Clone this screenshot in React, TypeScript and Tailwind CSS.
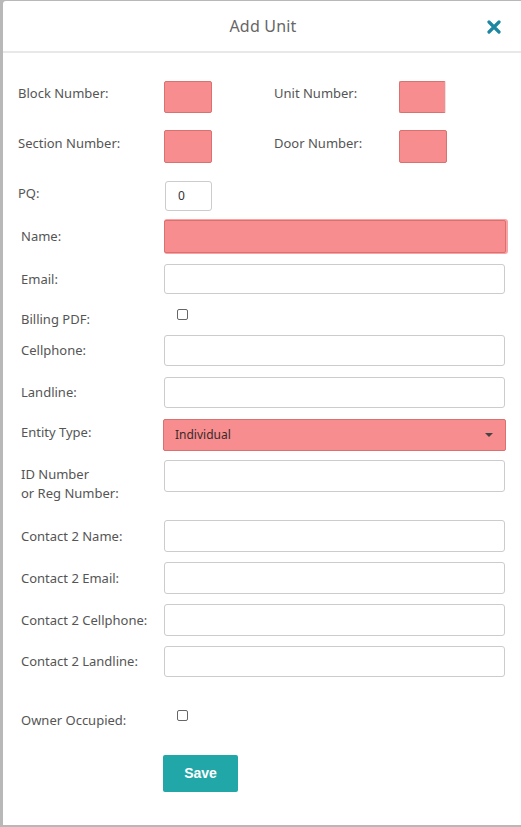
import React from 'react';

const font = { fontFamily: '"Noto Sans", "Liberation Sans", Arial, sans-serif' };

function Label({ children, className = '' }: { children: React.ReactNode; className?: string }) {
  return <div className={`text-[13px] text-[#555] leading-[19px] ${className}`}>{children}</div>;
}

function TextBox({ className = '' }: { className?: string }) {
  return <div className={`w-[341px] border border-[#ccc] rounded-[3px] bg-white ${className}`} />;
}

function Check() {
  return <span className="block w-[11px] h-[11px] border border-[#666] rounded-[2px] bg-white" />;
}

export default function App() {
  return (
    <div className="w-[521px] h-[827px] bg-[#b8b8b8] pl-[3px] pb-[2px] pt-px" style={font}>
      <div className="h-full bg-white rounded-tl-[3px] flex flex-col">
        {/* header */}
        <div className="h-[52px] flex items-center justify-center relative border-b-2 border-[#e8e8e8]">
          <span className="text-[16px] text-[#666] tracking-[0.2px] ml-[2px]">Add Unit</span>
          <svg className="absolute right-[20px] top-[19px]" width="14" height="14" viewBox="0 0 14 14">
            <path d="M2 2 L12 12 M12 2 L2 12" stroke="#1d86a1" strokeWidth="3.2" strokeLinecap="round" />
          </svg>
        </div>

        {/* form */}
        <div className="flex flex-col">
          {/* block / unit */}
          <div className="flex items-start mt-[28px] h-[32px]">
            <Label className="w-[161px] pl-[15px] pt-[3px]">Block Number:</Label>
            <div className="w-[48px] h-[32px] bg-[#f78d8f] border border-[#d8716f] rounded-[2px]" />
            <Label className="w-[125px] pl-[62px] box-content pt-[3px]">Unit Number:</Label>
            <div className="w-[47px] h-[32px] bg-[#f78d8f] border border-[#d8716f] border-r-[#e3e3e3] rounded-[2px]" />
          </div>

          {/* section / door */}
          <div className="flex items-start mt-[17px] h-[33px]">
            <Label className="w-[161px] pl-[15px] pt-[4px]">Section Number:</Label>
            <div className="w-[48px] h-[33px] bg-[#f78d8f] border border-[#d8716f] rounded-[2px]" />
            <Label className="w-[125px] pl-[62px] box-content pt-[4px]">Door Number:</Label>
            <div className="w-[48px] h-[33px] bg-[#f78d8f] border border-[#d8716f] rounded-[2px]" />
          </div>

          {/* PQ */}
          <div className="flex items-start mt-[18px] h-[30px]">
            <Label className="w-[162px] pl-[15px] pt-[3px]">PQ:</Label>
            <div className="w-[47px] h-[30px] border border-[#ccc] rounded-[3px] flex items-center pl-[12px] text-[12px] text-[#333]">0</div>
          </div>

          {/* Name */}
          <div className="flex items-center mt-[9px] h-[33px]">
            <Label className="w-[161px] pl-[18px]">Name:</Label>
            <div className="w-[342px] h-[33px] bg-[#f78d8f] border border-[#d8716f] rounded-[2px] shadow-[1px_0_0_1px_#f9a3a4]" />
          </div>

          {/* Email */}
          <div className="flex items-center mt-[11px] h-[30px]">
            <Label className="w-[161px] pl-[18px]">Email:</Label>
            <TextBox className="h-[30px]" />
          </div>

          {/* Billing PDF */}
          <div className="flex items-start mt-[15px] h-[26px]">
            <Label className="w-[174px] pl-[18px] pt-[1px]">Billing PDF:</Label>
            <Check />
          </div>

          {/* Cellphone */}
          <div className="flex items-center h-[31px]">
            <Label className="w-[161px] pl-[18px]">Cellphone:</Label>
            <TextBox className="h-[31px]" />
          </div>

          {/* Landline */}
          <div className="flex items-center mt-[11px] h-[31px]">
            <Label className="w-[161px] pl-[18px]">Landline:</Label>
            <TextBox className="h-[31px]" />
          </div>

          {/* Entity Type */}
          <div className="flex items-start mt-[11px] h-[32px]">
            <Label className="w-[160px] pl-[18px] pt-[4px]">Entity Type:</Label>
            <div className="w-[343px] h-[32px] bg-[#f78d8f] border border-[#d8716f] rounded-[2px] flex items-center justify-between pl-[11px] pr-[12px]">
              <span className="text-[12px] text-[#3a2a2a]">Individual</span>
              <svg width="8" height="4" viewBox="0 0 8 4">
                <path d="M0 0 L8 0 L4 4 Z" fill="#444" />
              </svg>
            </div>
          </div>

          {/* ID Number */}
          <div className="flex items-start mt-[9px] h-[40px]">
            <Label className="w-[161px] pl-[18px] pt-[5px]">ID Number<br />or Reg Number:</Label>
            <TextBox className="h-[32px]" />
          </div>

          {/* Contact 2 Name */}
          <div className="flex items-center mt-[20px] h-[32px]">
            <Label className="w-[161px] pl-[18px]">Contact 2 Name:</Label>
            <TextBox className="h-[32px]" />
          </div>

          <div className="flex items-center mt-[10px] h-[32px]">
            <Label className="w-[161px] pl-[18px]">Contact 2 Email:</Label>
            <TextBox className="h-[32px]" />
          </div>

          <div className="flex items-center mt-[10px] h-[32px]">
            <Label className="w-[161px] pl-[18px]">Contact 2 Cellphone:</Label>
            <TextBox className="h-[32px]" />
          </div>

          <div className="flex items-center mt-[10px] h-[31px]">
            <Label className="w-[161px] pl-[18px]">Contact 2 Landline:</Label>
            <TextBox className="h-[31px]" />
          </div>

          {/* Owner Occupied */}
          <div className="flex items-start mt-[33px] h-[26px]">
            <Label className="w-[174px] pl-[18px] pt-[1px]">Owner Occupied:</Label>
            <Check />
          </div>

          {/* Save */}
          <div className="flex mt-[19px] pl-[160px]">
            <button
              className="w-[75px] h-[37px] bg-[#22a7a8] rounded-[2px] text-white text-[14px] font-bold"
              style={{ fontFamily: '"Liberation Sans", Arial, sans-serif' }}
            >
              Save
            </button>
          </div>
        </div>
      </div>
    </div>
  );
}
